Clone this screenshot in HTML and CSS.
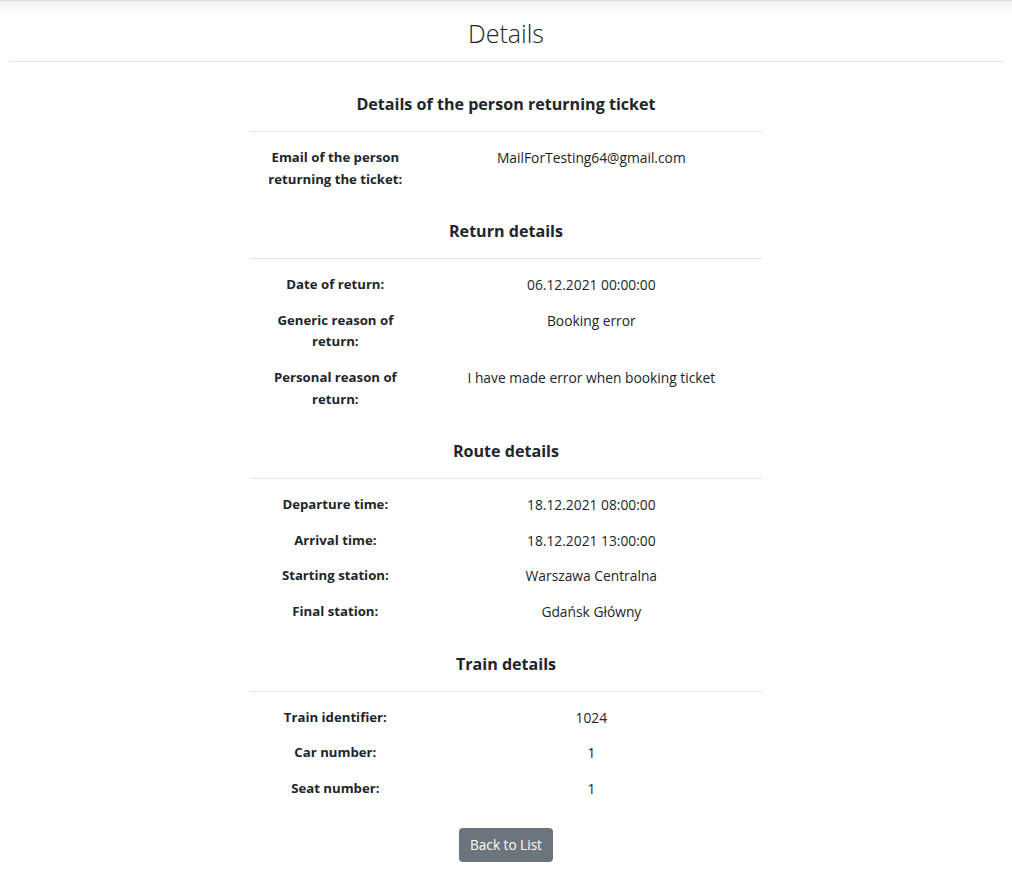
FILE: index.html
```html
<!DOCTYPE html>
<html lang="en">
<head>
<meta charset="utf-8">
<title>Details</title>
<link rel="stylesheet" href="styles.css">
</head>
<body>
<div class="topshade"></div>
<header class="page-head">
  <h1 class="page-title">Details</h1>
</header>
<main class="content">
  <section class="block first">
    <h4 class="block-title">Details of the person returning ticket</h4>
    <div class="rows">
      <div class="row"><div class="label">Email of the person returning the ticket:</div><div class="value">MailForTesting64@gmail.com</div></div>
    </div>
  </section>
  <section class="block">
    <h4 class="block-title">Return details</h4>
    <div class="rows">
      <div class="row"><div class="label">Date of return:</div><div class="value">06.12.2021 00:00:00</div></div>
      <div class="row"><div class="label">Generic reason of return:</div><div class="value">Booking error</div></div>
      <div class="row"><div class="label">Personal reason of return:</div><div class="value">I have made error when booking ticket</div></div>
    </div>
  </section>
  <section class="block">
    <h4 class="block-title">Route details</h4>
    <div class="rows">
      <div class="row"><div class="label">Departure time:</div><div class="value">18.12.2021 08:00:00</div></div>
      <div class="row"><div class="label">Arrival time:</div><div class="value">18.12.2021 13:00:00</div></div>
      <div class="row"><div class="label">Starting station:</div><div class="value">Warszawa Centralna</div></div>
      <div class="row"><div class="label">Final station:</div><div class="value">Gdańsk Główny</div></div>
    </div>
  </section>
  <section class="block">
    <h4 class="block-title">Train details</h4>
    <div class="rows">
      <div class="row"><div class="label">Train identifier:</div><div class="value">1024</div></div>
      <div class="row"><div class="label">Car number:</div><div class="value">1</div></div>
      <div class="row"><div class="label">Seat number:</div><div class="value">1</div></div>
    </div>
  </section>
  <div class="actions">
    <a class="btn" href="#">Back to List</a>
  </div>
</main>
</body>
</html>
```

FILE: styles.css
```css
* { box-sizing: border-box; }
html, body { margin: 0; padding: 0; background: #fff; }
body {
  font-family: "Open Sans", "Noto Sans", sans-serif;
  font-size: 13.8px;
  line-height: 21.6px;
  color: #212529;
}
.topshade {
  height: 15px;
  border-top: 1px solid #dcdcdc;
  background: linear-gradient(#f2f2f2, #ffffff);
}
.page-head {
  margin: 0 9px;
  border-bottom: 1px solid #e5e5e5;
  padding-bottom: 10px;
}
.page-title {
  margin: 0;
  text-align: center;
  font-weight: 300;
  font-size: 25px;
  line-height: 36px;
}
.content {
  width: 512px;
  margin: 0 auto;
}
.block { margin-top: 31px; }
.block.first { margin-top: 32px; }
.block-title {
  margin: 0;
  padding-bottom: 16px;
  border-bottom: 1px solid #e5e5e5;
  text-align: center;
  font-size: 16.1px;
  font-weight: 700;
  line-height: 21px;
}
.rows { padding-top: 15px; }
.row {
  display: grid;
  grid-template-columns: 1fr 2fr;
  margin-bottom: 14px;
}
.label {
  padding: 0 15px;
  text-align: center;
  font-weight: 700;
  font-size: 13.2px;
}
.value {
  padding: 0 15px;
  text-align: center;
}
.actions {
  text-align: center;
  padding-top: 15px;
}
.btn {
  display: inline-block;
  background: #6c757d;
  color: #fff;
  text-decoration: none;
  padding: 6px 11px;
  border-radius: 4px;
  font-size: 13.6px;
  line-height: 21.6px;
}
```
